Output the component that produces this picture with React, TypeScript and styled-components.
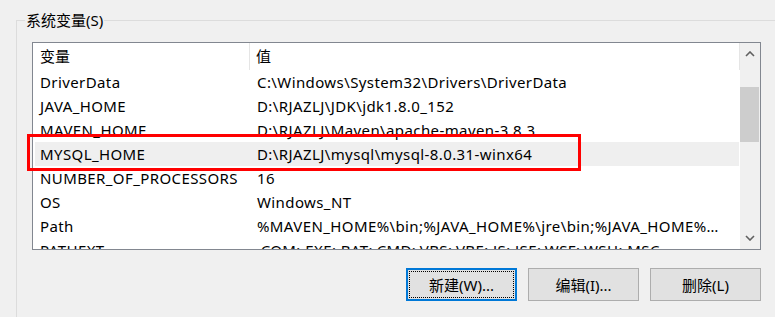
import React from 'react';
import styled, { createGlobalStyle } from 'styled-components';

const GlobalStyle = createGlobalStyle`
  html, body {
    margin: 0;
    padding: 0;
    background: #f0f0f0;
    overflow: hidden;
  }
  body {
    font-family: "Noto Sans", "Noto Sans CJK SC", sans-serif;
    font-size: 15px;
    color: #000;
  }
`;

const Page = styled.div`
  width: 775px;
  height: 317px;
  padding: 20px 0 0 16px;
  box-sizing: border-box;
  overflow: hidden;
`;

const GroupBox = styled.div`
  position: relative;
  border-top: 1px solid #dcdcdc;
  border-left: 1px solid #dcdcdc;
  height: 400px;
  padding: 21px 0 0 15px;
  box-sizing: border-box;
`;

const GroupTitle = styled.div`
  position: absolute;
  top: -12px;
  left: 8px;
  padding: 0 1px;
  background: #f0f0f0;
  line-height: 22px;
`;

const ListBox = styled.div`
  position: relative;
  width: 729px;
  height: 208px;
  border: 1px solid #828790;
  box-sizing: border-box;
  background: #fff;
  display: flex;
  overflow: hidden;
`;

const ListContent = styled.div`
  flex: 1;
  display: flex;
  flex-direction: column;
  min-width: 0;
`;

const Header = styled.div`
  display: flex;
  height: 27px;
  flex-shrink: 0;
`;

const HeaderCell = styled.div<{ $w?: number; $pad: number }>`
  ${(p) => (p.$w ? `width: ${p.$w}px; flex-shrink: 0;` : 'flex: 1;')}
  box-sizing: border-box;
  padding-left: ${(p) => p.$pad}px;
  border-right: 1px solid #e5e5e5;
  display: flex;
  align-items: center;
  line-height: 27px;
`;

const Row = styled.div<{ $selected?: boolean }>`
  display: flex;
  width: 704px;
  height: 24px;
  flex-shrink: 0;
  margin-left: 2px;
  background: ${(p) => (p.$selected ? '#efefef' : 'transparent')};
  white-space: nowrap;
  letter-spacing: 0.4px;
`;

const NameCell = styled.div`
  width: 215px;
  flex-shrink: 0;
  padding-left: 5px;
  box-sizing: border-box;
  line-height: 24px;
  overflow: hidden;
`;

const ValueCell = styled.div`
  width: 471px;
  flex-shrink: 0;
  padding-left: 7px;
  box-sizing: border-box;
  line-height: 24px;
  overflow: hidden;
  text-overflow: ellipsis;
`;

const ScrollBar = styled.div`
  width: 20px;
  flex-shrink: 0;
  background: #f0f0f0;
  display: flex;
  flex-direction: column;
  align-items: stretch;
`;

const ArrowBox = styled.div`
  height: 22px;
  display: flex;
  align-items: center;
  justify-content: center;
  flex-shrink: 0;
`;

const Track = styled.div`
  flex: 1;
  display: flex;
  flex-direction: column;
  padding-top: 22px;
`;

const Thumb = styled.div`
  height: 55px;
  margin-right: 1px;
  background: #cdcdcd;
`;

const Highlight = styled.div`
  position: absolute;
  left: 10px;
  top: 113px;
  width: 554px;
  height: 37px;
  border: 3px solid #ff0000;
  box-sizing: border-box;
  pointer-events: none;
`;

const ButtonRow = styled.div`
  width: 729px;
  display: flex;
  justify-content: flex-end;
  gap: 11px;
  margin-top: 18px;
`;

const Button = styled.button<{ $focused?: boolean }>`
  width: 111px;
  height: 33px;
  box-sizing: border-box;
  background: #e1e1e1;
  border: ${(p) => (p.$focused ? '2px solid #0078d7' : '1px solid #adadad')};
  padding: 0;
  font-family: "Noto Sans", "Noto Sans CJK SC", sans-serif;
  font-size: 15px;
  color: #000;
  display: flex;
  align-items: center;
  justify-content: center;
  position: relative;
  ${(p) =>
    p.$focused
      ? `&::after {
          content: '';
          position: absolute;
          inset: 1px;
          border: 1px dotted #000;
        }`
      : ''}
`;

const Chevron = ({ up }: { up?: boolean }) => (
  <svg width="10" height="6" viewBox="0 0 10 6">
    <path
      d={up ? 'M1 5 L5 1 L9 5' : 'M1 1 L5 5 L9 1'}
      fill="none"
      stroke="#606060"
      strokeWidth="1.6"
    />
  </svg>
);

const vars: [string, string][] = [
  ['DriverData', 'C:\\Windows\\System32\\Drivers\\DriverData'],
  ['JAVA_HOME', 'D:\\RJAZLJ\\JDK\\jdk1.8.0_152'],
  ['MAVEN_HOME', 'D:\\RJAZLJ\\Maven\\apache-maven-3.8.3'],
  ['MYSQL_HOME', 'D:\\RJAZLJ\\mysql\\mysql-8.0.31-winx64'],
  ['NUMBER_OF_PROCESSORS', '16'],
  ['OS', 'Windows_NT'],
  ['Path', '%MAVEN_HOME%\\bin;%JAVA_HOME%\\jre\\bin;%JAVA_HOME%\\bin;%SystemRoot%\\system32'],
  ['PATHEXT', '.COM;.EXE;.BAT;.CMD;.VBS;.VBE;.JS;.JSE;.WSF;.WSH;.MSC'],
];

export default function App() {
  return (
    <Page>
      <GlobalStyle />
      <GroupBox>
        <GroupTitle>系统变量(S)</GroupTitle>
        <ListBox>
          <ListContent>
            <Header>
              <HeaderCell $w={217} $pad={7}>变量</HeaderCell>
              <HeaderCell $pad={6}>值</HeaderCell>
            </Header>
            {vars.map(([name, value]) => (
              <Row key={name} $selected={name === 'MYSQL_HOME'}>
                <NameCell>{name}</NameCell>
                <ValueCell>{value}</ValueCell>
              </Row>
            ))}
          </ListContent>
          <ScrollBar>
            <ArrowBox>
              <Chevron up />
            </ArrowBox>
            <Track>
              <Thumb />
            </Track>
            <ArrowBox>
              <Chevron />
            </ArrowBox>
          </ScrollBar>
        </ListBox>
        <Highlight />
        <ButtonRow>
          <Button $focused>新建(W)...</Button>
          <Button>编辑(I)...</Button>
          <Button>删除(L)</Button>
        </ButtonRow>
      </GroupBox>
    </Page>
  );
}
